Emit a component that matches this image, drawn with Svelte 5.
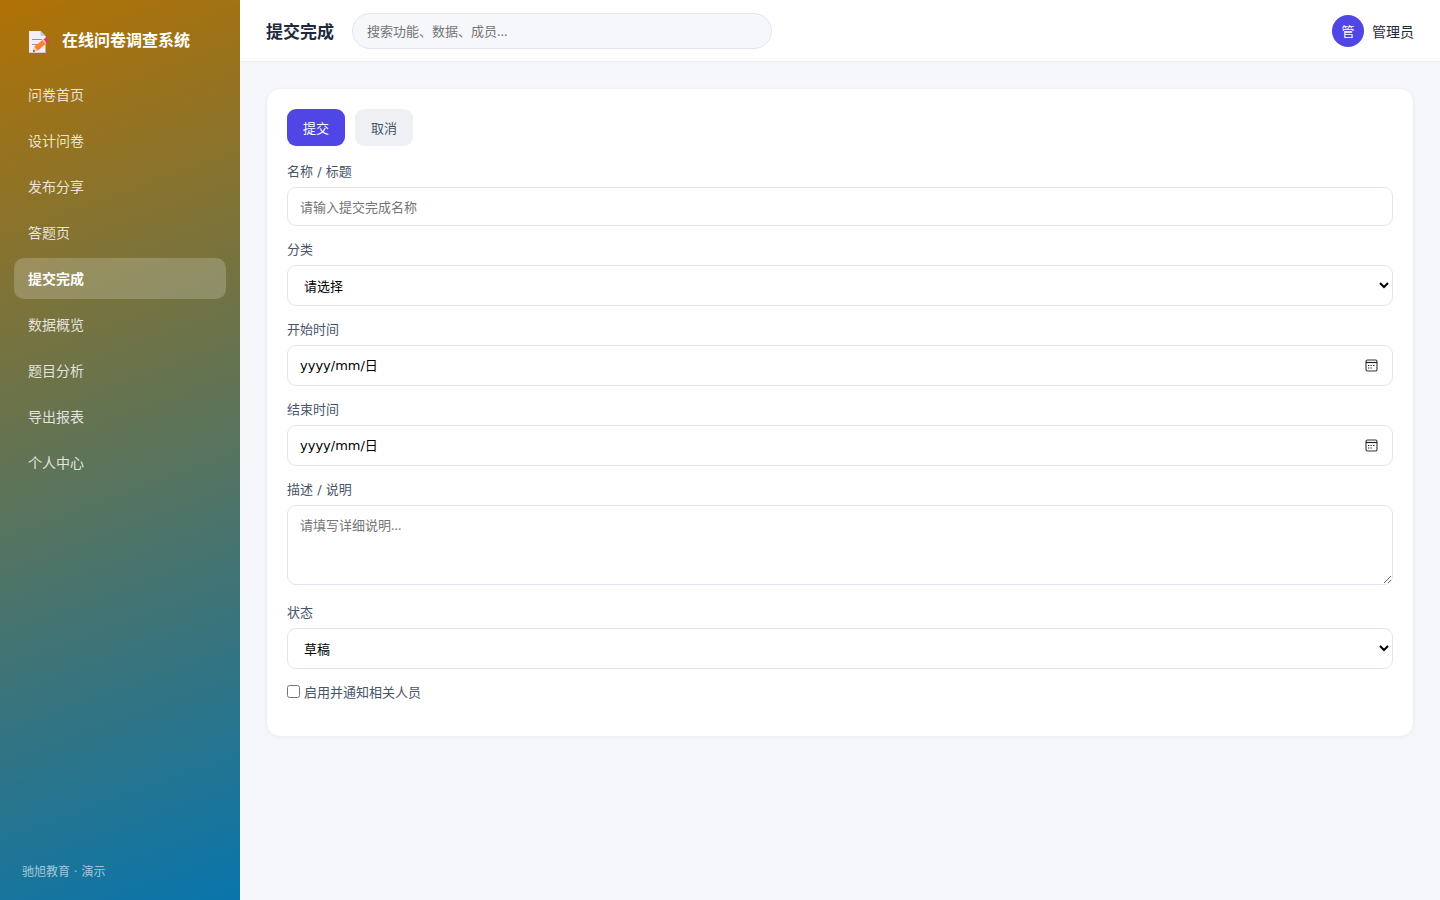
<script>
  const navItems = [
    '问卷首页',
    '设计问卷',
    '发布分享',
    '答题页',
    '提交完成',
    '数据概览',
    '题目分析',
    '导出报表',
    '个人中心',
  ];

  let current = $state('提交完成');

  let keyword = $state('');
  let form = $state({
    name: '',
    category: '',
    start: '',
    end: '',
    desc: '',
    status: '草稿',
    notify: false,
  });

  const dateFields = [
    { key: 'start', label: '开始时间' },
    { key: 'end', label: '结束时间' },
  ];

  function select(e, item) {
    e.preventDefault();
    current = item;
  }

  function reset() {
    form = { name: '', category: '', start: '', end: '', desc: '', status: '草稿', notify: false };
  }
</script>

<div class="layout">
  <aside class="sidebar">
    <div class="brand">
      <svg class="brand-icon" viewBox="0 0 22 24" aria-hidden="true">
        <path d="M1 1h11.5L17.500 6v17H1z" fill="#f3eef8" />
        <path d="M12.500 1v5h5z" fill="#cdc4d6" />
        <path d="M4 9.500h10M4 14.500h6" stroke="#998ea4" stroke-width="1" />
        <path d="M1 22.500h16.500" stroke="#d5cbdc" stroke-width="1" />
        <path d="M5 22l1.500-5.500 8-6.500 3.500 3.800-8 6.700z" fill="#ff822d" />
        <path d="M5 22l1.400-5.300 3.500 3.900z" fill="#f9c89a" />
        <path d="M5 22l.6-2.200 1.500 1.500z" fill="#433b3b" />
        <path d="M14.500 10l1-0.800 3.500 3.900-1 0.700z" fill="#d9cfe0" />
        <path d="M15.500 9.200l1.800-1.200 4.500 3.800-2.600 2z" fill="#f8315f" />
      </svg>
      <span>在线问卷调查系统</span>
    </div>

    <nav>
      {#each navItems as item}
        <a href="#{item}" class:active={current === item} onclick={(e) => select(e, item)}>{item}</a>
      {/each}
    </nav>

    <div class="sidebar-footer">驰旭教育 · 演示</div>
  </aside>

  <div class="main">
    <header class="topbar">
      <h1>{current}</h1>
      <input
        class="search"
        type="search"
        aria-label="搜索"
        placeholder="搜索功能、数据、成员..."
        bind:value={keyword}
      />
      <div class="user">
        <span class="avatar">管</span>
        <span>管理员</span>
      </div>
    </header>

    <main class="content">
      <form class="card" onsubmit={(e) => e.preventDefault()}>
        <div class="toolbar">
          <button type="submit" class="btn primary">提交</button>
          <button type="button" class="btn" onclick={reset}>取消</button>
        </div>

        <div class="field">
          <label for="name">名称 / 标题</label>
          <input id="name" class="control" type="text" placeholder="请输入提交完成名称" bind:value={form.name} />
        </div>

        <div class="field">
          <label for="category">分类</label>
          <select id="category" class="control tall" bind:value={form.category}>
            <option value="">请选择</option>
            <option value="类型一">类型一</option>
            <option value="类型二">类型二</option>
          </select>
        </div>

        {#each dateFields as field}
          <div class="field">
            <label for={field.key}>{field.label}</label>
            <div class="control tall date">
              <input id={field.key} type="text" placeholder="yyyy/mm/日" bind:value={form[field.key]} />
              <button type="button" aria-label="选择日期">
                <svg viewBox="0 0 13 13" aria-hidden="true">
                  <rect x="1" y="1" width="11" height="11" rx="1.500" fill="none" stroke="#333" stroke-width="1.100" />
                  <path d="M1 3.500h11" stroke="#222" stroke-width="1.200" />
                  <path d="M5.500 6.500h1.300M8 6.500h1.500M3 6.500h1.300M3 9h1.300M5.500 9h1.300" stroke="#222" stroke-width="1.200" />
                </svg>
              </button>
            </div>
          </div>
        {/each}

        <div class="field desc">
          <label for="desc">描述 / 说明</label>
          <textarea id="desc" class="control" placeholder="请填写详细说明..." bind:value={form.desc}></textarea>
        </div>

        <div class="field">
          <label for="status">状态</label>
          <select id="status" class="control tall" bind:value={form.status}>
            <option value="草稿">草稿</option>
            <option value="已发布">已发布</option>
          </select>
        </div>

        <div class="field">
          <label class="check">
            <input type="checkbox" bind:checked={form.notify} />
            启用并通知相关人员
          </label>
        </div>
      </form>
    </main>
  </div>
</div>

<style>
  :global(body) {
    margin: 0;
    background: #f5f7fb;
  }

  .layout,
  .layout * {
    box-sizing: border-box;
  }

  .layout {
    display: flex;
    min-height: 100vh;
    color: #1e293b;
    font-family: 'Noto Sans', 'Noto Sans CJK SC', sans-serif;
    font-size: 14px;
  }

  /* Sidebar */
  .sidebar {
    display: flex;
    flex-direction: column;
    flex: 0 0 240px;
    padding: 22px 14px 18px;
    background: linear-gradient(160deg, #b17205, #0975ac);
    color: #fff;
  }

  .brand {
    display: flex;
    align-items: center;
    gap: 12px;
    height: 36px;
    margin-bottom: 16px;
    padding: 0 14px;
    font-size: 16px;
    font-weight: 700;
    line-height: 20px;
  }

  .brand-icon {
    width: 22px;
    height: 24px;
    margin-top: 4px;
  }

  nav {
    display: flex;
    flex-direction: column;
    gap: 5px;
  }

  nav a {
    padding: 0 14px;
    border-radius: 10px;
    color: rgba(255, 255, 255, 0.82);
    line-height: 41px;
    text-decoration: none;
  }

  nav a:hover {
    background: rgba(255, 255, 255, 0.1);
  }

  nav a.active {
    background: rgba(255, 255, 255, 0.2);
    color: #fff;
    font-weight: 700;
  }

  .sidebar-footer {
    margin-top: auto;
    padding: 0 8px;
    color: rgba(255, 255, 255, 0.6);
    font-family: 'DejaVu Sans', 'Noto Sans CJK SC', sans-serif;
    font-size: 12px;
    line-height: 20px;
  }

  /* Top bar */
  .main {
    display: flex;
    flex: 1;
    flex-direction: column;
    min-width: 0;
  }

  .topbar {
    display: flex;
    align-items: center;
    gap: 18px;
    height: 62px;
    padding: 0 26px;
    border-bottom: 1px solid #eceef3;
    background: #fff;
  }

  h1 {
    margin: 0;
    font-size: 17px;
    font-weight: 700;
  }

  .search {
    flex: 0 1 420px;
    min-width: 0;
    height: 36px;
    padding: 0 14px;
    border: 1px solid #e2e5ee;
    border-radius: 18px;
    outline: none;
    background: #f5f7fb;
    font-family: inherit;
    font-size: 13px;
  }

  .user {
    display: flex;
    align-items: center;
    gap: 8px;
    margin-left: auto;
  }

  .avatar {
    display: flex;
    align-items: center;
    justify-content: center;
    width: 32px;
    height: 32px;
    border-radius: 50%;
    background: #4f46e5;
    color: #fff;
    font-size: 13px;
  }

  /* Form card */
  .content {
    padding: 26px;
  }

  .card {
    padding: 20px;
    border: 1px solid #eff0f5;
    border-radius: 14px;
    background: #fff;
    box-shadow: 0 1px 4px rgba(30, 41, 59, 0.04);
  }

  .toolbar {
    display: flex;
    gap: 10px;
    margin-bottom: 16px;
  }

  .btn {
    height: 37px;
    padding: 0 16px;
    border: 0;
    border-radius: 9px;
    background: #eef0f4;
    color: #475569;
    font-family: inherit;
    font-size: 13px;
    cursor: pointer;
  }

  .btn.primary {
    background: #4f46e5;
    color: #fff;
  }

  .field {
    margin-bottom: 14px;
  }

  .field.desc {
    margin-bottom: 18px;
  }

  label {
    display: block;
    margin-bottom: 6px;
    color: #475569;
    font-family: 'DejaVu Sans', 'Noto Sans CJK SC', sans-serif;
    font-size: 13px;
    line-height: 19px;
  }

  .control {
    display: block;
    width: 100%;
    height: 39px;
    padding: 0 12px;
    border: 1px solid #e2e5ee;
    border-radius: 9px;
    background: #fff;
    color: #000;
    font-family: inherit;
    font-size: 13px;
  }

  .control.tall {
    height: 41px;
  }

  textarea.control {
    height: 80px;
    padding: 9px 12px;
    resize: vertical;
  }

  .date {
    display: flex;
    align-items: center;
    padding-right: 14px;
  }

  .date input {
    flex: 1;
    min-width: 0;
    padding: 0;
    border: 0;
    outline: none;
    background: none;
    font-family: 'DejaVu Sans', 'Noto Sans CJK SC', sans-serif;
    font-size: 13px;
  }

  .date input::placeholder {
    color: #000;
  }

  .date button {
    display: flex;
    padding: 0;
    border: 0;
    background: none;
    cursor: pointer;
  }

  .date svg {
    width: 13px;
    height: 13px;
  }

  .check {
    display: flex;
    gap: 4px;
    margin-bottom: 0;
  }

  .check input {
    width: 13px;
    height: 13px;
    margin: 2px 0 0;
  }
</style>
